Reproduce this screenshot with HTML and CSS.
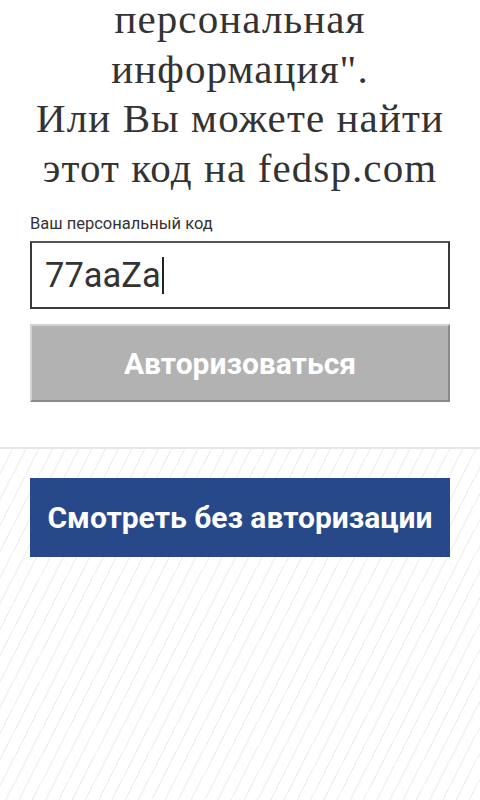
FILE: index.html
```html
<!DOCTYPE html>
<html lang="ru">
<head>
<meta charset="utf-8">
<link rel="stylesheet" href="styles.css">
</head>
<body>
<section class="login">
  <p class="intro">персональная<br>информация".<br>Или Вы можете найти<br>этот код на fedsp.com</p>
  <label class="label" for="code">Ваш персональный код</label>
  <div class="input"><span class="value">77aaZa</span><span class="caret"></span></div>
  <button class="btn btn-grey">Авторизоваться</button>
</section>
<section class="guest">
  <button class="btn btn-blue">Смотреть без авторизации</button>
</section>
</body>
</html>
```
FILE: styles.css
```css
html, body {
  margin: 0;
  padding: 0;
  background: #fff;
}
body {
  width: 480px;
  height: 800px;
  overflow: hidden;
  display: flex;
  flex-direction: column;
  font-family: Roboto, "Noto Sans", sans-serif;
}
.login {
  padding: 0 30px 45px;
  display: flex;
  flex-direction: column;
}
.intro {
  margin: -5px -20px 0;
  font-family: "Liberation Serif", "DejaVu Serif", serif;
  font-size: 41px;
  line-height: 49.5px;
  letter-spacing: 1.1px;
  color: #333;
  text-align: center;
  white-space: nowrap;
}
.label {
  margin-top: 21px;
  font-size: 16.5px;
  line-height: 20px;
  color: #333;
}
.input {
  margin-top: 7px;
  height: 64px;
  border: 2px solid #3a3a3a;
  border-top-color: #555;
  display: flex;
  align-items: center;
  padding-left: 13px;
  font-size: 34.5px;
  color: #333;
}
.caret {
  width: 2px;
  height: 37px;
  background: #222;
  margin-left: 1px;
}
.btn {
  display: flex;
  align-items: center;
  justify-content: center;
  width: 420px;
  font-family: Roboto, "Noto Sans", sans-serif;
  font-weight: bold;
  font-size: 30px;
  color: #fff;
  padding: 0;
}
.btn-grey {
  margin-top: 15px;
  height: 78px;
  background: #b2b2b2;
  border: 2px solid;
  border-color: #d2d2d2 #8a8a8a #8a8a8a #d2d2d2;
}
.guest {
  flex: 1;
  border-top: 2px solid #e6e6e6;
  padding: 29px 30px 0;
  background: repeating-linear-gradient(117deg, #fff 0 10.5px, #f0f0f0 10.5px 11.8px);
}
.btn-blue {
  height: 79px;
  background: #284989;
  border: none;
}
```
